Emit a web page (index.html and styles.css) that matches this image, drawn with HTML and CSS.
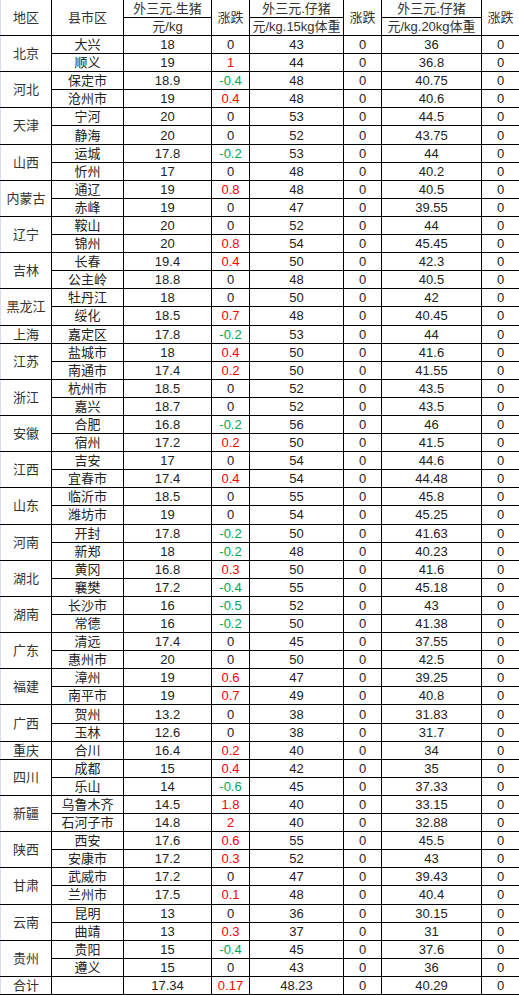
FILE: index.html
```html
<!DOCTYPE html>
<html lang="zh-CN">
<head>
<meta charset="utf-8">
<title>外三元生猪价格</title>
<link rel="stylesheet" href="styles.css">
</head>
<body>
<table class="price-table">
<colgroup>
<col class="c-region"><col class="c-city"><col class="c-price"><col class="c-chg"><col class="c-p15"><col class="c-chg"><col class="c-p20"><col class="c-chg-last">
</colgroup>
<thead>
<tr>
<th rowspan="2">地区</th>
<th rowspan="2">县市区</th>
<th>外三元.生猪</th>
<th rowspan="2">涨跌</th>
<th class="h-top">外三元.仔猪</th>
<th rowspan="2">涨跌</th>
<th class="h-top">外三元.仔猪</th>
<th rowspan="2">涨跌</th>
</tr>
<tr>
<th>元/kg</th>
<th>元/kg.15kg体重</th>
<th>元/kg.20kg体重</th>
</tr>
</thead>
<tbody>
<tr><td rowspan="2" class="region">北京</td><td>大兴</td><td>18</td><td>0</td><td>43</td><td>0</td><td>36</td><td>0</td></tr>
<tr><td>顺义</td><td>19</td><td class="up">1</td><td>44</td><td>0</td><td>36.8</td><td>0</td></tr>
<tr><td rowspan="2" class="region">河北</td><td>保定市</td><td>18.9</td><td class="down">-0.4</td><td>48</td><td>0</td><td>40.75</td><td>0</td></tr>
<tr><td>沧州市</td><td>19</td><td class="up">0.4</td><td>48</td><td>0</td><td>40.6</td><td>0</td></tr>
<tr><td rowspan="2" class="region">天津</td><td>宁河</td><td>20</td><td>0</td><td>53</td><td>0</td><td>44.5</td><td>0</td></tr>
<tr><td>静海</td><td>20</td><td>0</td><td>52</td><td>0</td><td>43.75</td><td>0</td></tr>
<tr><td rowspan="2" class="region">山西</td><td>运城</td><td>17.8</td><td class="down">-0.2</td><td>53</td><td>0</td><td>44</td><td>0</td></tr>
<tr><td>忻州</td><td>17</td><td>0</td><td>48</td><td>0</td><td>40.2</td><td>0</td></tr>
<tr><td rowspan="2" class="region">内蒙古</td><td>通辽</td><td>19</td><td class="up">0.8</td><td>48</td><td>0</td><td>40.5</td><td>0</td></tr>
<tr><td>赤峰</td><td>19</td><td>0</td><td>47</td><td>0</td><td>39.55</td><td>0</td></tr>
<tr><td rowspan="2" class="region">辽宁</td><td>鞍山</td><td>20</td><td>0</td><td>52</td><td>0</td><td>44</td><td>0</td></tr>
<tr><td>锦州</td><td>20</td><td class="up">0.8</td><td>54</td><td>0</td><td>45.45</td><td>0</td></tr>
<tr><td rowspan="2" class="region">吉林</td><td>长春</td><td>19.4</td><td class="up">0.4</td><td>50</td><td>0</td><td>42.3</td><td>0</td></tr>
<tr><td>公主岭</td><td>18.8</td><td>0</td><td>48</td><td>0</td><td>40.5</td><td>0</td></tr>
<tr><td rowspan="2" class="region">黑龙江</td><td>牡丹江</td><td>18</td><td>0</td><td>50</td><td>0</td><td>42</td><td>0</td></tr>
<tr><td>绥化</td><td>18.5</td><td class="up">0.7</td><td>48</td><td>0</td><td>40.45</td><td>0</td></tr>
<tr><td class="region">上海</td><td>嘉定区</td><td>17.8</td><td class="down">-0.2</td><td>53</td><td>0</td><td>44</td><td>0</td></tr>
<tr><td rowspan="2" class="region">江苏</td><td>盐城市</td><td>18</td><td class="up">0.4</td><td>50</td><td>0</td><td>41.6</td><td>0</td></tr>
<tr><td>南通市</td><td>17.4</td><td class="up">0.2</td><td>50</td><td>0</td><td>41.55</td><td>0</td></tr>
<tr><td rowspan="2" class="region">浙江</td><td>杭州市</td><td>18.5</td><td>0</td><td>52</td><td>0</td><td>43.5</td><td>0</td></tr>
<tr><td>嘉兴</td><td>18.7</td><td>0</td><td>52</td><td>0</td><td>43.5</td><td>0</td></tr>
<tr><td rowspan="2" class="region">安徽</td><td>合肥</td><td>16.8</td><td class="down">-0.2</td><td>56</td><td>0</td><td>46</td><td>0</td></tr>
<tr><td>宿州</td><td>17.2</td><td class="up">0.2</td><td>50</td><td>0</td><td>41.5</td><td>0</td></tr>
<tr><td rowspan="2" class="region">江西</td><td>吉安</td><td>17</td><td>0</td><td>54</td><td>0</td><td>44.6</td><td>0</td></tr>
<tr><td>宜春市</td><td>17.4</td><td class="up">0.4</td><td>54</td><td>0</td><td>44.48</td><td>0</td></tr>
<tr><td rowspan="2" class="region">山东</td><td>临沂市</td><td>18.5</td><td>0</td><td>55</td><td>0</td><td>45.8</td><td>0</td></tr>
<tr><td>潍坊市</td><td>19</td><td>0</td><td>54</td><td>0</td><td>45.25</td><td>0</td></tr>
<tr><td rowspan="2" class="region">河南</td><td>开封</td><td>17.8</td><td class="down">-0.2</td><td>50</td><td>0</td><td>41.63</td><td>0</td></tr>
<tr><td>新郑</td><td>18</td><td class="down">-0.2</td><td>48</td><td>0</td><td>40.23</td><td>0</td></tr>
<tr><td rowspan="2" class="region">湖北</td><td>黄冈</td><td>16.8</td><td class="up">0.3</td><td>50</td><td>0</td><td>41.6</td><td>0</td></tr>
<tr><td>襄樊</td><td>17.2</td><td class="down">-0.4</td><td>55</td><td>0</td><td>45.18</td><td>0</td></tr>
<tr><td rowspan="2" class="region">湖南</td><td>长沙市</td><td>16</td><td class="down">-0.5</td><td>52</td><td>0</td><td>43</td><td>0</td></tr>
<tr><td>常德</td><td>16</td><td class="down">-0.2</td><td>50</td><td>0</td><td>41.38</td><td>0</td></tr>
<tr><td rowspan="2" class="region">广东</td><td>清远</td><td>17.4</td><td>0</td><td>45</td><td>0</td><td>37.55</td><td>0</td></tr>
<tr><td>惠州市</td><td>20</td><td>0</td><td>50</td><td>0</td><td>42.5</td><td>0</td></tr>
<tr><td rowspan="2" class="region">福建</td><td>漳州</td><td>19</td><td class="up">0.6</td><td>47</td><td>0</td><td>39.25</td><td>0</td></tr>
<tr><td>南平市</td><td>19</td><td class="up">0.7</td><td>49</td><td>0</td><td>40.8</td><td>0</td></tr>
<tr><td rowspan="2" class="region">广西</td><td>贺州</td><td>13.2</td><td>0</td><td>38</td><td>0</td><td>31.83</td><td>0</td></tr>
<tr><td>玉林</td><td>12.6</td><td>0</td><td>38</td><td>0</td><td>31.7</td><td>0</td></tr>
<tr><td class="region">重庆</td><td>合川</td><td>16.4</td><td class="up">0.2</td><td>40</td><td>0</td><td>34</td><td>0</td></tr>
<tr><td rowspan="2" class="region">四川</td><td>成都</td><td>15</td><td class="up">0.4</td><td>42</td><td>0</td><td>35</td><td>0</td></tr>
<tr><td>乐山</td><td>14</td><td class="down">-0.6</td><td>45</td><td>0</td><td>37.33</td><td>0</td></tr>
<tr><td rowspan="2" class="region">新疆</td><td>乌鲁木齐</td><td>14.5</td><td class="up">1.8</td><td>40</td><td>0</td><td>33.15</td><td>0</td></tr>
<tr><td>石河子市</td><td>14.8</td><td class="up">2</td><td>40</td><td>0</td><td>32.88</td><td>0</td></tr>
<tr><td rowspan="2" class="region">陕西</td><td>西安</td><td>17.6</td><td class="up">0.6</td><td>55</td><td>0</td><td>45.5</td><td>0</td></tr>
<tr><td>安康市</td><td>17.2</td><td class="up">0.3</td><td>52</td><td>0</td><td>43</td><td>0</td></tr>
<tr><td rowspan="2" class="region">甘肃</td><td>武威市</td><td>17.2</td><td>0</td><td>47</td><td>0</td><td>39.43</td><td>0</td></tr>
<tr><td>兰州市</td><td>17.5</td><td class="up">0.1</td><td>48</td><td>0</td><td>40.4</td><td>0</td></tr>
<tr><td rowspan="2" class="region">云南</td><td>昆明</td><td>13</td><td>0</td><td>36</td><td>0</td><td>30.15</td><td>0</td></tr>
<tr><td>曲靖</td><td>13</td><td class="up">0.3</td><td>37</td><td>0</td><td>31</td><td>0</td></tr>
<tr><td rowspan="2" class="region">贵州</td><td>贵阳</td><td>15</td><td class="down">-0.4</td><td>45</td><td>0</td><td>37.6</td><td>0</td></tr>
<tr><td>遵义</td><td>15</td><td>0</td><td>43</td><td>0</td><td>36</td><td>0</td></tr>
<tr><td class="region">合计</td><td></td><td>17.34</td><td class="up">0.17</td><td>48.23</td><td>0</td><td>40.29</td><td>0</td></tr>
</tbody>
</table>
</body>
</html>
```
FILE: styles.css
```css
html, body {
  margin: 0;
  padding: 0;
  background: #ffffff;
}

.price-table {
  border-collapse: collapse;
  table-layout: fixed;
  width: 519px;
  height: 995px;
  border-left: 1px solid #d6dee9;
  font-family: "Liberation Sans", "Noto Sans CJK SC", sans-serif;
  font-size: 13px;
  color: #222;
}

.c-region { width: 51px; }
.c-city { width: 72px; }
.c-price { width: 88px; }
.c-chg { width: 38px; }
.c-p15 { width: 94px; }
.c-p20 { width: 100px; }
.c-chg-last { width: 38px; }

.price-table th,
.price-table td {
  border-right: 1px solid #000;
  border-bottom: 1px solid #000;
  padding: 0;
  height: 17px;
  line-height: 15px;
  text-align: center;
  vertical-align: middle;
  font-weight: normal;
  white-space: nowrap;
  overflow: hidden;
}

.price-table th {
  color: #333;
}

.price-table td.region {
  color: #333;
}

.price-table .up {
  color: #ff0000;
}

.price-table .down {
  color: #00a651;
}
```
